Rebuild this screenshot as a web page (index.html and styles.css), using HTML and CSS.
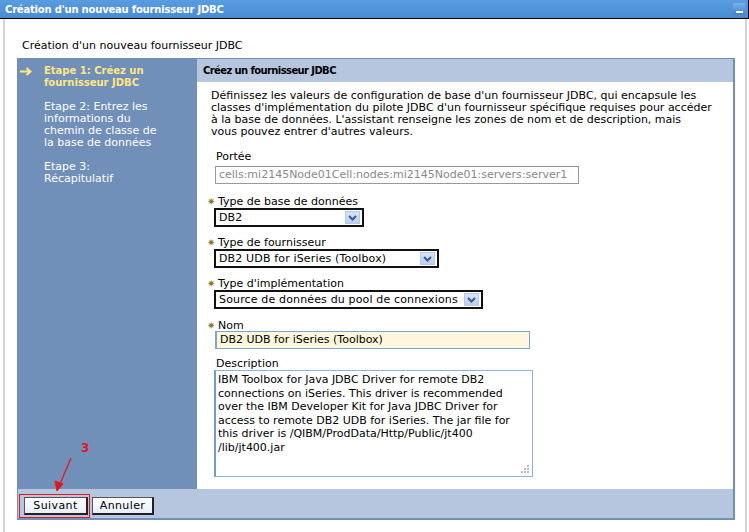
FILE: index.html
```html
<!DOCTYPE html>
<html lang="fr">
<head>
<meta charset="utf-8">
<title>Création d'un nouveau fournisseur JDBC</title>
<link rel="stylesheet" href="styles.css">
</head>
<body>
<div class="titlebar">
  <span class="title-text">Création d'un nouveau fournisseur JDBC</span>
  <span class="minbtn"><span class="dash"></span></span>
</div>
<div class="frame">
  <div class="page-heading">Création d'un nouveau fournisseur JDBC</div>
  <div class="wizard">
    <div class="steps">
      <div class="step current">
        <svg class="step-arrow" width="12" height="9" viewBox="0 0 12 9"><path d="M0 4.5H10M6.5 1L10.5 4.5L6.5 8" fill="none" stroke="#ffe680" stroke-width="2"/></svg>
        Etape 1: Créez un fournisseur JDBC
      </div>
      <div class="step">Etape 2: Entrez les informations du chemin de classe de la base de données</div>
      <div class="step">Etape 3: Récapitulatif</div>
    </div>
    <div class="main">
      <div class="main-header">Créez un fournisseur JDBC</div>
      <div class="main-body">
        <p class="intro">Définissez les valeurs de configuration de base d'un fournisseur JDBC, qui encapsule les<br>classes d'implémentation du pilote JDBC d'un fournisseur spécifique requises pour accéder<br>à la base de données. L'assistant renseigne les zones de nom et de description, mais<br>vous pouvez entrer d'autres valeurs.</p>
        <div class="fields">
          <div class="label plain portee-label">Portée</div>
          <div class="input disabled">cells:mi2145Node01Cell:nodes:mi2145Node01:servers:server1</div>

          <div class="label req first-req"><span class="star">✷</span>Type de base de données</div>
          <div class="select w1"><span class="sel-text">DB2</span><span class="sel-btn"><svg width="9" height="6" viewBox="0 0 9 6"><path d="M1 1L4.5 4.5L8 1" fill="none" stroke="#3d5a8a" stroke-width="2"/></svg></span></div>

          <div class="label req"><span class="star">✷</span>Type de fournisseur</div>
          <div class="select w2"><span class="sel-text">DB2 UDB for iSeries (Toolbox)</span><span class="sel-btn"><svg width="9" height="6" viewBox="0 0 9 6"><path d="M1 1L4.5 4.5L8 1" fill="none" stroke="#3d5a8a" stroke-width="2"/></svg></span></div>

          <div class="label req"><span class="star">✷</span>Type d'implémentation</div>
          <div class="select w3"><span class="sel-text">Source de données du pool de connexions</span><span class="sel-btn"><svg width="9" height="6" viewBox="0 0 9 6"><path d="M1 1L4.5 4.5L8 1" fill="none" stroke="#3d5a8a" stroke-width="2"/></svg></span></div>

          <div class="label req nom-label"><span class="star">✷</span>Nom</div>
          <div class="input name">DB2 UDB for iSeries (Toolbox)</div>

          <div class="label plain desc-label">Description</div>
          <div class="textarea">IBM Toolbox for Java JDBC Driver for remote DB2<br>connections on iSeries. This driver is recommended<br>over the IBM Developer Kit for Java JDBC Driver for<br>access to remote DB2 UDB for iSeries. The jar file for<br>this driver is /QIBM/ProdData/Http/Public/jt400<br>/lib/jt400.jar<svg class="grip" width="9" height="9" viewBox="0 0 9 9"><g fill="#bbb"><rect x="7" y="1" width="2" height="2"/><rect x="4" y="4" width="2" height="2"/><rect x="7" y="4" width="2" height="2"/><rect x="1" y="7" width="2" height="2"/><rect x="4" y="7" width="2" height="2"/><rect x="7" y="7" width="2" height="2"/></g></svg></div>
        </div>
      </div>
    </div>
    <div class="buttonbar">
      <span class="btn btn-next">Suivant</span>
      <span class="btn btn-cancel">Annuler</span>
    </div>
  </div>
</div>
<div class="annot">
  <span class="annot-num">3</span>
  <svg class="annot-arrow" width="30" height="40" viewBox="0 0 30 40"><line x1="20" y1="1" x2="9" y2="27" stroke="#e8141c" stroke-width="1.3"/><path d="M6 34L4 24L12 27Z" fill="#e8141c" stroke="#e8141c" stroke-width="1"/></svg>
  <span class="annot-box"></span>
</div>
</body>
</html>
```
FILE: styles.css
```css
html, body {
  margin: 0;
  padding: 0;
  background: #fff;
}
body {
  font-family: "DejaVu Sans", Verdana, sans-serif;
  font-size: 11px;
  color: #000;
  position: relative;
  width: 749px;
  height: 532px;
  overflow: hidden;
}
.titlebar {
  height: 19px;
  background: linear-gradient(#5a9ce0, #4a8cd4);
  border-bottom: 1px solid #000;
  border-right: 1px solid #000;
  display: flex;
  align-items: center;
  justify-content: space-between;
  padding-left: 5px;
  padding-right: 3px;
  box-sizing: border-box;
}
.title-text {
  color: #fff;
  font-weight: bold;
  font-size: 10px;
  letter-spacing: -0.2px;
}
.minbtn {
  width: 12px;
  height: 12px;
  background: linear-gradient(#7ab4ec, #3f7fc6);
  display: flex;
  align-items: flex-end;
  justify-content: center;
  padding-bottom: 2px;
  box-sizing: border-box;
}
.dash {
  width: 7px;
  height: 2px;
  background: #fff;
}
.frame {
  margin: 0 2px 0 3px;
  border-left: 2px solid #d4d4d4;
  border-right: 2px solid #d4d4d4;
  height: 513px;
  box-sizing: border-box;
  padding-left: 12px;
}
.page-heading {
  padding-top: 20px;
  padding-left: 5px;
  line-height: 13px;
  height: 19px;
}
.wizard {
  width: 718px;
  display: grid;
  grid-template-columns: 180px 538px;
  grid-template-rows: 431px 31px;
}
.steps {
  background: #7190b9;
  padding: 7px 0 0 27px;
}
.step {
  color: #fff;
  line-height: 12px;
  margin-bottom: 12px;
  position: relative;
  width: 118px;
}
.step.current {
  color: #ffe680;
  font-weight: bold;
  font-size: 10px;
}
.step-arrow {
  position: absolute;
  left: -24px;
  top: 2px;
}
.main {
  border-right: 2px solid #7190b9;
  border-top: 1px solid #7190b9;
  display: flex;
  flex-direction: column;
}
.main-header {
  background: #b5c6de;
  height: 23px;
  line-height: 24px;
  padding-left: 6px;
  font-weight: bold;
  font-size: 10px;
  letter-spacing: -0.6px;
}
.main-body {
  padding: 8px 0 0 14px;
}
.intro {
  margin: 0;
  line-height: 12px;
  white-space: nowrap;
}
.fields {
  padding-left: 3px;
  margin-top: 13px;
}
.label {
  line-height: 12px;
  height: 12px;
}
.plain {
  padding-left: 2px;
}
.portee-label {
  margin-bottom: 3px;
}
.req {
  margin-left: -7px;
  margin-top: 10px;
}
.first-req {
  margin-top: 12px;
}
.nom-label {
  margin-top: 11px;
}
.desc-label {
  margin-top: 9px;
}
.star {
  color: #8a7a20;
  font-size: 10px;
  display: inline-block;
  width: 11px;
}
.input {
  height: 18px;
  line-height: 16px;
  box-sizing: border-box;
  padding-left: 3px;
  white-space: nowrap;
  overflow: hidden;
}
.disabled {
  width: 364px;
  border: 1px solid #999;
  color: #888;
  margin-left: 1px;
}
.name {
  width: 315px;
  background: #fff7dd;
  border: 1px solid #7ea4cf;
  border-left-width: 2px;
  margin-left: 1px;
  margin-top: -1px;
}
.select {
  height: 19px;
  border: 2px solid #111;
  box-sizing: border-box;
  display: flex;
  align-items: center;
  justify-content: space-between;
  padding: 0 2px 0 3px;
}
.w1 { width: 150px; }
.w2 { width: 225px; }
.w3 { width: 269px; }
.sel-text {
  white-space: nowrap;
  letter-spacing: 0.15px;
}
.sel-btn {
  width: 15px;
  height: 13px;
  background: linear-gradient(#d6e4fa, #bcd0f2);
  border: 1px solid #b4c8ea;
  box-sizing: border-box;
  display: flex;
  align-items: center;
  justify-content: center;
}
.textarea {
  width: 319px;
  height: 107px;
  border: 1px solid #8fb3d8;
  border-left: 2px solid #6f9ccc;
  box-sizing: border-box;
  padding: 2px 0 0 2px;
  line-height: 13.5px;
  white-space: nowrap;
  position: relative;
}
.grip {
  position: absolute;
  right: 3px;
  bottom: 3px;
}
.buttonbar {
  grid-column: 1 / 3;
  background: #b5c6de;
  border-left: 1px solid #7190b9;
  border-right: 2px solid #7190b9;
  border-bottom: 2px solid #7190b9;
  display: flex;
  align-items: center;
  gap: 4px;
  padding: 4px 0 0 6px;
}
.btn {
  display: inline-block;
  height: 18px;
  line-height: 16px;
  box-sizing: border-box;
  background: linear-gradient(#ffffff, #e8eef8);
  border: 1px solid #222;
  border-right-width: 2px;
  border-bottom-width: 2px;
  border-top-color: #555;
  border-left-color: #555;
  text-align: center;
  letter-spacing: 0.4px;
}
.btn-next {
  width: 64px;
}
.btn-cancel {
  width: 62px;
}
.annot-num {
  position: absolute;
  left: 81px;
  top: 441px;
  color: #e8141c;
  font-weight: bold;
  font-size: 12px;
}
.annot-arrow {
  position: absolute;
  left: 51px;
  top: 457px;
}
.annot-box {
  position: absolute;
  left: 19px;
  top: 494px;
  width: 71px;
  height: 24px;
  border: 1px solid #e8141c;
  box-sizing: border-box;
}
```
